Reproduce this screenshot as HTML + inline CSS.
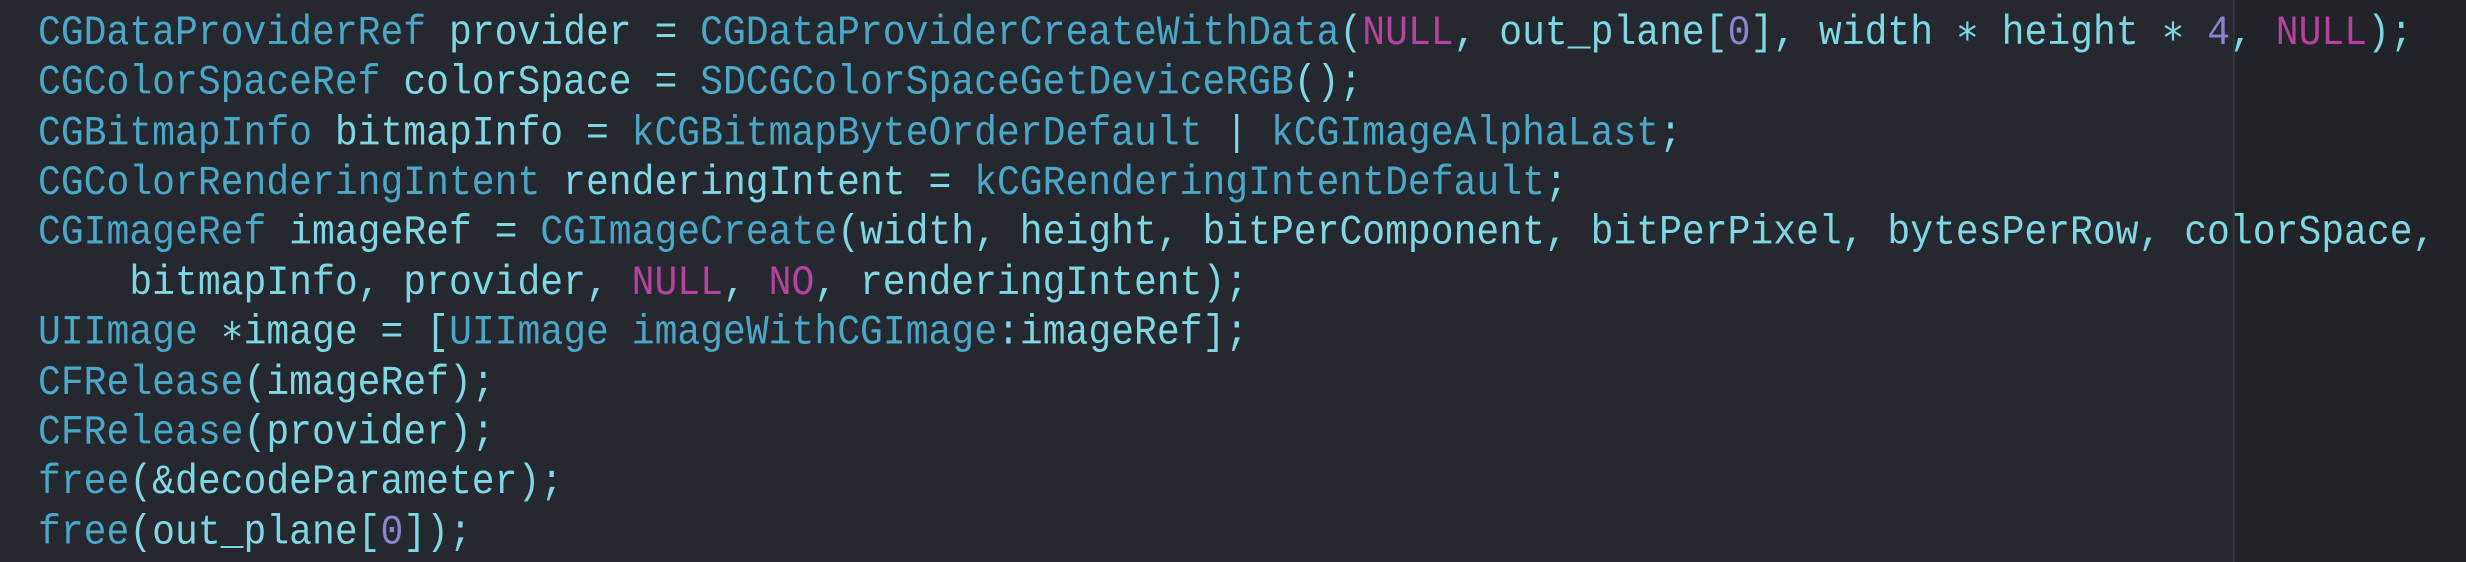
<!DOCTYPE html>
<html><head><meta charset="utf-8"><style>
html,body{margin:0;padding:0;}
body{width:2466px;height:562px;overflow:hidden;background:#262830;position:relative;}
.r{position:absolute;left:2233px;top:0;width:233px;height:562px;background:#222329;border-left:2px solid #34363e;}
pre{position:absolute;left:38px;top:9px;margin:0;font-family:"Liberation Mono","DejaVu Sans Mono",monospace;font-size:38.05px;line-height:45.36px;color:#7fd7e1;white-space:pre;transform:scale(1,1.1);transform-origin:0 0;}
.t{color:#4aa8c6}.k{color:#b5439e}.n{color:#8b84cf}
</style></head><body><div class="r"></div>
<pre><span class="t">CGDataProviderRef</span> provider = <span class="t">CGDataProviderCreateWithData</span>(<span class="k">NULL</span>, out_plane[<span class="n">0</span>], width ∗ height ∗ <span class="n">4</span>, <span class="k">NULL</span>);
<span class="t">CGColorSpaceRef</span> colorSpace = <span class="t">SDCGColorSpaceGetDeviceRGB</span>();
<span class="t">CGBitmapInfo</span> bitmapInfo = <span class="t">kCGBitmapByteOrderDefault</span> | <span class="t">kCGImageAlphaLast</span>;
<span class="t">CGColorRenderingIntent</span> renderingIntent = <span class="t">kCGRenderingIntentDefault</span>;
<span class="t">CGImageRef</span> imageRef = <span class="t">CGImageCreate</span>(width, height, bitPerComponent, bitPerPixel, bytesPerRow, colorSpace,
    bitmapInfo, provider, <span class="k">NULL</span>, <span class="k">NO</span>, renderingIntent);
<span class="t">UIImage</span> ∗image = [<span class="t">UIImage</span> <span class="t">imageWithCGImage</span>:imageRef];
<span class="t">CFRelease</span>(imageRef);
<span class="t">CFRelease</span>(provider);
<span class="t">free</span>(&amp;decodeParameter);
<span class="t">free</span>(out_plane[<span class="n">0</span>]);</pre>
</body></html>
